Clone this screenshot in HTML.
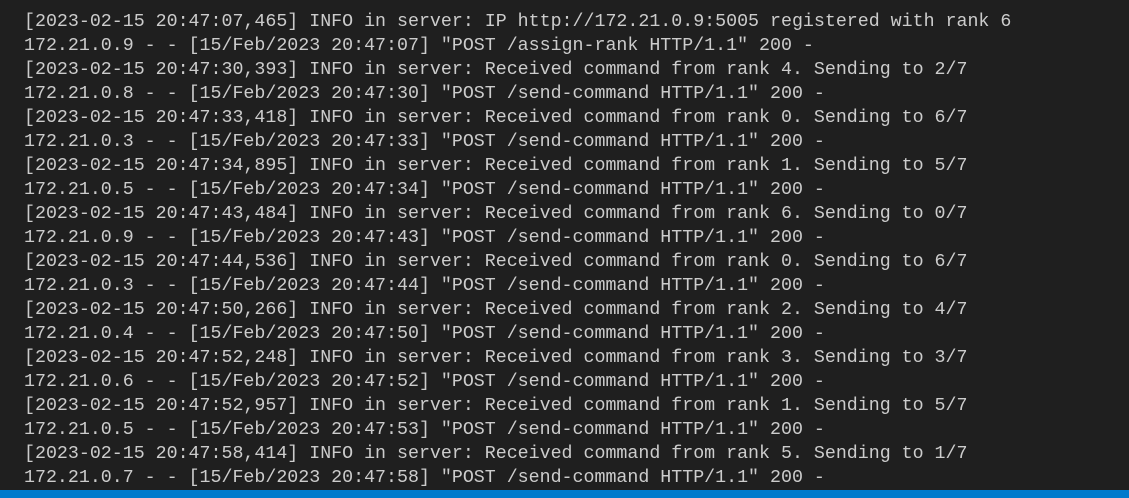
<!DOCTYPE html>
<html><head><style>
html,body{margin:0;padding:0;width:1129px;height:498px;overflow:hidden;background:#1f1f1f;}
pre{margin:0;position:absolute;left:24px;top:10px;font-family:"Liberation Mono",monospace;font-size:18.3px;line-height:24px;color:#cccccc;white-space:pre;}
.bar{position:absolute;left:0;top:490px;width:1129px;height:8px;background:#007acc;}
</style></head><body>
<pre>[2023-02-15 20:47:07,465] INFO in server: IP http://172.21.0.9:5005 registered with rank 6
172.21.0.9 - - [15/Feb/2023 20:47:07] "POST /assign-rank HTTP/1.1" 200 -
[2023-02-15 20:47:30,393] INFO in server: Received command from rank 4. Sending to 2/7
172.21.0.8 - - [15/Feb/2023 20:47:30] "POST /send-command HTTP/1.1" 200 -
[2023-02-15 20:47:33,418] INFO in server: Received command from rank 0. Sending to 6/7
172.21.0.3 - - [15/Feb/2023 20:47:33] "POST /send-command HTTP/1.1" 200 -
[2023-02-15 20:47:34,895] INFO in server: Received command from rank 1. Sending to 5/7
172.21.0.5 - - [15/Feb/2023 20:47:34] "POST /send-command HTTP/1.1" 200 -
[2023-02-15 20:47:43,484] INFO in server: Received command from rank 6. Sending to 0/7
172.21.0.9 - - [15/Feb/2023 20:47:43] "POST /send-command HTTP/1.1" 200 -
[2023-02-15 20:47:44,536] INFO in server: Received command from rank 0. Sending to 6/7
172.21.0.3 - - [15/Feb/2023 20:47:44] "POST /send-command HTTP/1.1" 200 -
[2023-02-15 20:47:50,266] INFO in server: Received command from rank 2. Sending to 4/7
172.21.0.4 - - [15/Feb/2023 20:47:50] "POST /send-command HTTP/1.1" 200 -
[2023-02-15 20:47:52,248] INFO in server: Received command from rank 3. Sending to 3/7
172.21.0.6 - - [15/Feb/2023 20:47:52] "POST /send-command HTTP/1.1" 200 -
[2023-02-15 20:47:52,957] INFO in server: Received command from rank 1. Sending to 5/7
172.21.0.5 - - [15/Feb/2023 20:47:53] "POST /send-command HTTP/1.1" 200 -
[2023-02-15 20:47:58,414] INFO in server: Received command from rank 5. Sending to 1/7
172.21.0.7 - - [15/Feb/2023 20:47:58] "POST /send-command HTTP/1.1" 200 -</pre>
<div class="bar"></div>
</body></html>
